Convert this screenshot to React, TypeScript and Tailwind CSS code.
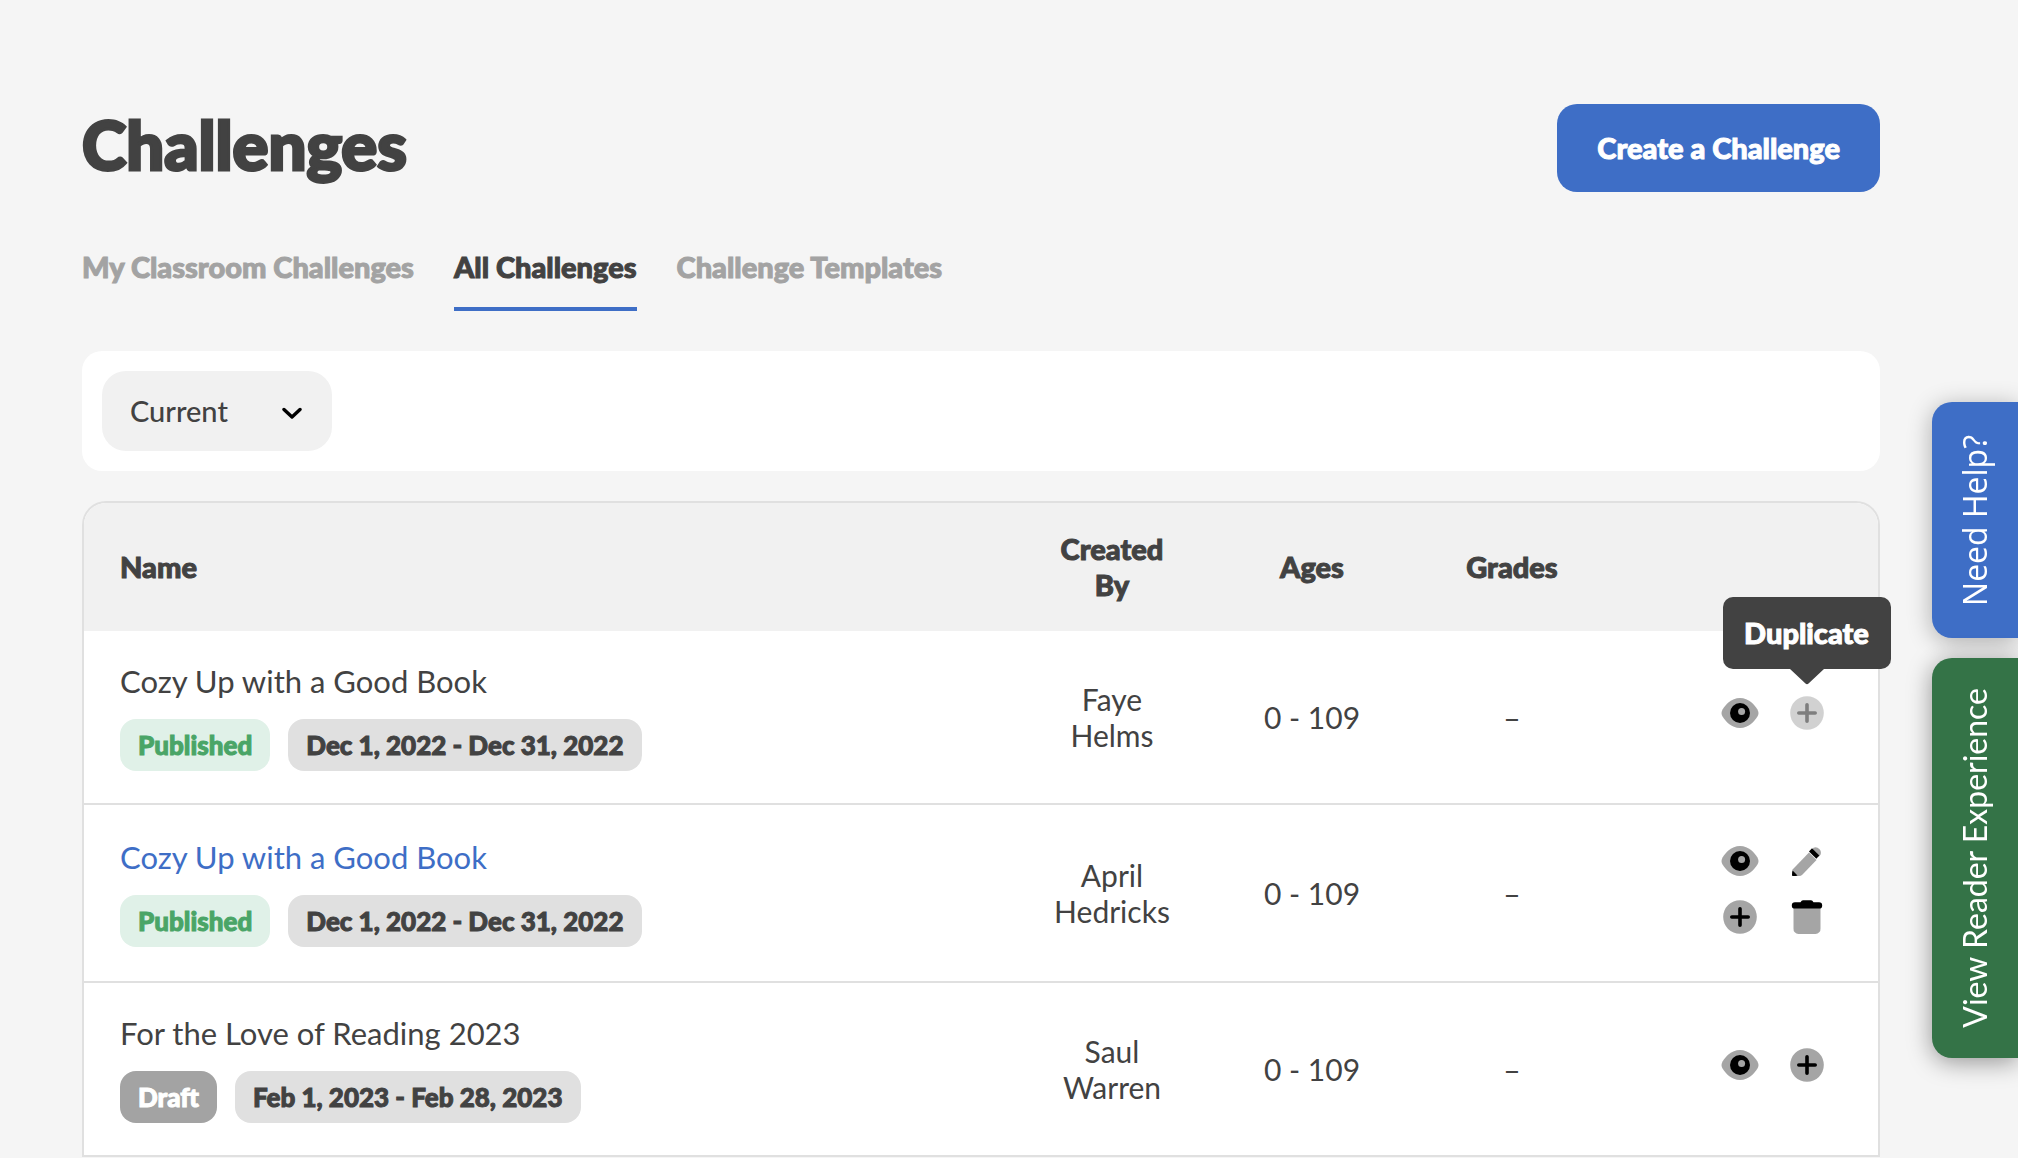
import { useState } from 'react';
import clsx from 'clsx';

type Action = 'preview' | 'edit' | 'duplicate' | 'delete';

interface Challenge {
  id: number;
  name: string;
  status: 'Published' | 'Draft';
  dates: string;
  createdBy: string;
  ages: string;
  grades: string;
  editable?: boolean;
  actions: Action[];
}

const tabs = ['My Classroom Challenges', 'All Challenges', 'Challenge Templates'];

const challenges: Challenge[] = [
  {
    id: 1,
    name: 'Cozy Up with a Good Book',
    status: 'Published',
    dates: 'Dec 1, 2022 - Dec 31, 2022',
    createdBy: 'Faye Helms',
    ages: '0 - 109',
    grades: '–',
    actions: ['preview', 'duplicate'],
  },
  {
    id: 2,
    name: 'Cozy Up with a Good Book',
    status: 'Published',
    dates: 'Dec 1, 2022 - Dec 31, 2022',
    createdBy: 'April Hedricks',
    ages: '0 - 109',
    grades: '–',
    editable: true,
    actions: ['preview', 'edit', 'duplicate', 'delete'],
  },
  {
    id: 3,
    name: 'For the Love of Reading 2023',
    status: 'Draft',
    dates: 'Feb 1, 2023 - Feb 28, 2023',
    createdBy: 'Saul Warren',
    ages: '0 - 109',
    grades: '–',
    actions: ['preview', 'duplicate'],
  },
];

const actionLabels: Record<Action, string> = {
  preview: 'Preview',
  edit: 'Edit',
  duplicate: 'Duplicate',
  delete: 'Delete',
};

// rounds and thickens the heavy labels
const heavy = 'font-black [-webkit-text-stroke:1px_currentColor]';

const ActionIcon = ({ type }: { type: Action }) => {
  switch (type) {
    case 'preview':
      return (
        <svg width="38" height="36" viewBox="0 0 38 36" aria-hidden="true">
          <path
            d="M19 3C28 3 33.500 10 36.300 14.200Q38.700 18 36.300 21.800C33.500 26 28 33 19 33S4.500 26 1.700 21.800Q-.7 18 1.700 14.200C4.500 10 10 3 19 3Z"
            fill="#a5a5a5"
          />
          <circle cx="19" cy="18" r="10" fill="#000" />
          <circle cx="20.600" cy="16.400" r="3.500" fill="#a5a5a5" />
        </svg>
      );
    case 'edit':
      return (
        <svg width="36" height="36" viewBox="0 0 36 36" aria-hidden="true">
          <path
            d="M3.600 26.500L20 9.500L27.500 17L13.500 31.500Q12 33 10 33H3Z"
            fill="#a5a5a5"
          />
          <path
            d="M23 6.500L24.500 4.800A5.400 5.400 0 0 1 31.500 11.800L29.500 14Z"
            fill="#a5a5a5"
          />
          <path d="M20 8.500L23 5.300L30.300 12.500L27.300 15.800Z" fill="#000" />
          <path d="M3.600 27.500L8.500 32.500Q7 33 4 33Q3 33 3 32Q3 29 3.600 27.500Z" fill="#000" />
        </svg>
      );
    case 'duplicate':
      return (
        <svg width="36" height="36" viewBox="0 0 36 36" aria-hidden="true">
          <circle cx="18" cy="18" r="16.800" fill="#a5a5a5" />
          <path
            d="M18 9.800V26.200M9.800 18H26.200"
            stroke="#000"
            strokeWidth="3.600"
            strokeLinecap="round"
          />
        </svg>
      );
    case 'delete':
      return (
        <svg width="36" height="36" viewBox="0 0 36 36" aria-hidden="true">
          <path
            d="M4.500 7H31.500V29.500A5 5 0 0 1 26.500 35H9.500A5 5 0 0 1 4.500 29.500Z"
            fill="#a5a5a5"
          />
          <path
            d="M6 3.200H11.500Q12.500 1.200 14 1.200H22Q23.500 1.200 24.500 3.200H30A3.200 3.200 0 0 1 30 9.600H6A3.200 3.200 0 0 1 6 3.200Z"
            fill="#000"
          />
        </svg>
      );
  }
};

const Tooltip = ({ text }: { text: string }) => (
  <span
    role="tooltip"
    className={clsx(
      'absolute bottom-full left-1/2 z-10 mb-[26px] flex h-[72px] w-[168px] -translate-x-1/2 items-center justify-center rounded-[10px] bg-[#424242] text-[29px] text-white',
      heavy,
    )}
  >
    {text}
    <svg
      className="absolute top-full left-1/2 -translate-x-1/2"
      width="34"
      height="16"
      viewBox="0 0 34 16"
      aria-hidden="true"
    >
      <path d="M0 0H34L18.500 14.500Q17 16 15.500 14.500Z" fill="#424242" />
    </svg>
  </span>
);

const StatusBadge = ({ status }: { status: Challenge['status'] }) => (
  <span
    className={clsx(
      'flex h-[52px] items-center rounded-2xl px-[18px] text-[26px]',
      heavy,
      status === 'Published'
        ? 'bg-[#e0f1e8] text-[#4aa567]'
        : 'bg-[#a3a3a3] text-white',
    )}
  >
    {status}
  </span>
);

const ChallengeRow = ({
  challenge,
  tooltip,
}: {
  challenge: Challenge;
  tooltip?: Action;
}) => (
  <tr>
    <td className="border-b-2 border-[#e0e0e0] py-8 pl-9 text-[31px]">
      {challenge.editable ? (
        <a href="#challenge" className="block leading-9 text-[#3e6ec6]">
          {challenge.name}
        </a>
      ) : (
        <p className="leading-9">{challenge.name}</p>
      )}
      <div className="mt-5 flex gap-[18px]">
        <StatusBadge status={challenge.status} />
        <span
          className={clsx(
            'flex h-[52px] items-center rounded-2xl bg-[#e0e0e0] px-[18px] text-[26px]',
            heavy,
          )}
        >
          {challenge.dates}
        </span>
      </div>
    </td>
    <td className="border-b-2 border-[#e0e0e0] px-10 text-center leading-9">
      {challenge.createdBy}
    </td>
    <td className="border-b-2 border-[#e0e0e0] text-center leading-9">
      {challenge.ages}
    </td>
    <td className="border-b-2 border-[#e0e0e0] text-center leading-9">
      {challenge.grades}
    </td>
    <td className="border-b-2 border-[#e0e0e0] pr-[38px]">
      <div className="ml-auto grid w-[134px] grid-cols-2 pt-7 pb-9">
        {challenge.actions.map(action => (
          <div key={action} className="flex h-14 items-center justify-center">
            <div className="relative">
              <button
                type="button"
                aria-label={actionLabels[action]}
                className={clsx(
                  'block cursor-pointer',
                  tooltip === action && 'opacity-50',
                )}
              >
                <ActionIcon type={action} />
              </button>
              {tooltip === action && <Tooltip text={actionLabels[action]} />}
            </div>
          </div>
        ))}
      </div>
    </td>
  </tr>
);

const SideTabs = () => (
  <div className="fixed top-[402px] right-0 flex flex-col gap-5 text-white">
    <a
      href="#help"
      className="flex h-[236px] w-[86px] items-center justify-center rounded-l-[20px] bg-[#3e6ec6] font-['Open_Sans',sans-serif] text-[32px] shadow-[0_4px_24px_rgba(0,0,0,0.3)]"
    >
      <span className="rotate-180 [writing-mode:vertical-rl]">Need Help?</span>
    </a>
    <a
      href="#reader"
      className="flex h-[400px] w-[86px] items-center justify-center rounded-l-[20px] bg-[#347347] text-[32px] shadow-[0_4px_24px_rgba(0,0,0,0.4)]"
    >
      <span className="rotate-180 [writing-mode:vertical-rl]">
        View Reader Experience
      </span>
    </a>
  </div>
);

const App = () => {
  const [activeTab, setActiveTab] = useState('All Challenges');
  const [period, setPeriod] = useState('Current');

  return (
    <div className="min-h-screen overflow-hidden bg-[#f5f5f5] font-[Lato,sans-serif] text-[#424242]">
      <main className="pt-[104px] pr-[138px] pl-[82px]">
        <header className="flex h-[88px] items-center justify-between">
          <h1 className="pb-2 text-[67px] leading-none font-black [-webkit-text-stroke:3px_currentColor]">
            Challenges
          </h1>
          <button
            type="button"
            className={clsx(
              'h-full cursor-pointer rounded-[20px] bg-[#3e6ec6] px-10 text-[29px] text-white',
              heavy,
            )}
          >
            Create a Challenge
          </button>
        </header>

        <nav className="mt-[50px] flex gap-10">
          {tabs.map(tab => (
            <button
              key={tab}
              type="button"
              onClick={() => setActiveTab(tab)}
              className={clsx(
                'cursor-pointer border-b-4 pb-4 text-[29px] leading-[49px]',
                heavy,
                tab === activeTab
                  ? 'border-[#3e6ec6]'
                  : 'border-transparent text-[#a3a3a3]',
              )}
            >
              {tab}
            </button>
          ))}
        </nav>

        <section className="mt-10 rounded-[20px] bg-white p-5">
          <div className="relative w-[230px]">
            <select
              aria-label="Challenge period"
              value={period}
              onChange={e => setPeriod(e.target.value)}
              className="h-20 w-full cursor-pointer appearance-none rounded-3xl bg-[#f1f1f1] pl-7 text-[29px] font-medium"
            >
              <option>Current</option>
              <option>Upcoming</option>
              <option>Past</option>
            </select>
            <svg
              className="pointer-events-none absolute top-9 right-[30px]"
              width="20"
              height="13"
              viewBox="0 0 20 13"
              fill="none"
              aria-hidden="true"
            >
              <path
                d="M2 2.500L10 10L18 2.500"
                stroke="#000"
                strokeWidth="3.400"
                strokeLinecap="round"
                strokeLinejoin="round"
              />
            </svg>
          </div>
        </section>

        <div className="mt-[30px] rounded-t-3xl border-2 border-b-0 border-[#e0e0e0] bg-white">
          <table className="w-full table-fixed border-separate border-spacing-0 text-[30px]">
            <thead className={clsx('text-[29px] leading-9', heavy)}>
              <tr>
                <th className="rounded-tl-[22px] bg-[#f1f1f1] pl-9 text-left font-black">
                  Name
                </th>
                <th className="w-[200px] bg-[#f1f1f1] px-10 py-7 font-black">
                  Created By
                </th>
                <th className="w-[200px] bg-[#f1f1f1] font-black">Ages</th>
                <th className="w-[200px] bg-[#f1f1f1] font-black">Grades</th>
                <th
                  aria-label="Actions"
                  className="w-[266px] rounded-tr-[22px] bg-[#f1f1f1]"
                />
              </tr>
            </thead>
            <tbody>
              {challenges.map(challenge => (
                <ChallengeRow
                  key={challenge.id}
                  challenge={challenge}
                  tooltip={challenge.id === 1 ? 'duplicate' : undefined}
                />
              ))}
            </tbody>
          </table>
        </div>
      </main>
      <SideTabs />
    </div>
  );
};

export default App;
